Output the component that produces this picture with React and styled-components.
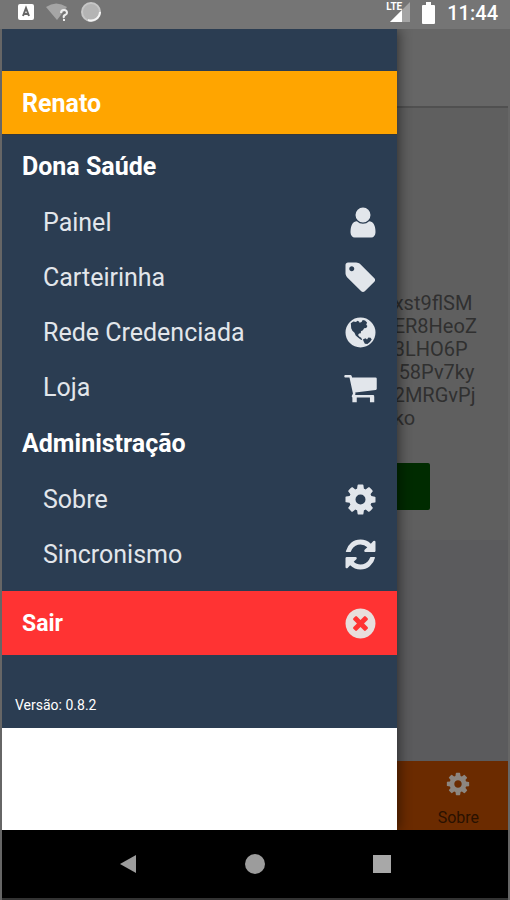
import styled, { createGlobalStyle } from 'styled-components';

const icons = {
  user: 'M1664 1399q0 109-62.5 187t-150.5 78h-854q-88 0-150.5-78t-62.5-187q0-85 8.5-160.5t31.5-152 58.5-131 94-89 134.5-34.5q131 128 313 128t313-128q76 0 134.5 34.5t94 89 58.5 131 31.5 152 8.5 160.5zm-256-887q0 159-112.5 271.5t-271.5 112.5-271.5-112.5-112.5-271.5 112.5-271.5 271.5-112.5 271.5 112.5 112.5 271.5z',
  tag: 'M576 448q0-53-37.5-90.5t-90.5-37.5-90.5 37.5-37.5 90.5 37.5 90.5 90.5 37.5 90.5-37.5 37.5-90.5zm1067 576q0 53-37 90l-491 492q-39 37-91 37-53 0-90-37l-715-716q-38-37-64.5-101t-26.5-117v-416q0-52 38-90t90-38h416q53 0 117 26.5t102 64.5l715 714q37 39 37 91z',
  globe:
    'M896 128a768 768 0 1 0 0 1536a768 768 0 1 0 0-1536z M400 420l130-90 140 30 60-70 90 40 30 70 100-40 60-110 120 30 100 110-40 110 60 60-60 100-110 20-60 100-100 50-10 110-90 10-50 80 70 80 90 60 60 120-90-30-130-110-120-100-60-140-110-100-60-130z M1020 1260l130-70 80 60 70-100 110 20 60 90-90 120-130 110-130-20-60-110z',
  cart: 'M480 1380h224v276h-224zm900 0h220v276h-220zM1728 448v512q0 24-16.5 42.5t-40.5 21.5l-1044 122q13 60 13 70 0 16-24 64h920q26 0 45 19t19 45-19 45-45 19h-1024q-26 0-45-19t-19-45q0-11 8-31.5t16-36 21.5-40 15.5-29.5l-177-823h-204q-26 0-45-19t-19-45 19-45 45-19h256q16 0 28.5 6.5t19.5 15.5 13 24.5 8 26 5.5 29.5 4.5 26h1201q26 0 45 19t19 45z',
  cog: 'M1152 896q0-106-75-181t-181-75-181 75-75 181 75 181 181 75 181-75 75-181zm512-109v222q0 12-8 23t-20 13l-185 28q-19 54-39 91 35 50 107 138 10 12 10 25t-9 23q-27 37-99 108t-94 71q-12 0-26-9l-138-108q-44 23-91 38-16 136-29 186-7 28-36 28h-222q-14 0-24.5-8.5t-11.5-21.5l-28-184q-49-16-90-37l-141 107q-10 9-25 9-14 0-25-11-126-114-165-168-7-10-7-23 0-12 8-23 15-21 51-66.5t54-70.5q-27-50-41-99l-183-27q-13-2-21-12.5t-8-23.5v-222q0-12 8-23t19-13l186-28q14-46 39-92-40-57-107-138-10-12-10-24 0-10 9-23 26-36 98.5-107.5t94.5-71.5q13 0 26 10l138 107q44-23 91-38 16-136 29-186 7-28 36-28h222q14 0 24.5 8.5t11.5 21.5l28 184q49 16 90 37l142-107q9-9 24-9 13 0 25 10 129 119 165 170 7 8 7 22 0 12-8 23-15 21-51 66.5t-54 70.5q26 50 41 98l183 28q13 2 21 12.5t8 23.5z',
  refresh:
    'M1639 1056q0 5-1 7-64 268-268 434.5t-478 166.5q-146 0-282.5-55t-243.5-157l-129 129q-19 19-45 19t-45-19-19-45v-448q0-26 19-45t45-19h448q26 0 45 19t19 45-19 45l-137 137q71 66 161 102t187 36q134 0 250-65t186-179q11-17 53-117 8-23 30-23h192q13 0 22.5 9.5t9.5 22.5zm25-800v448q0 26-19 45t-45 19h-448q-26 0-45-19t-19-45 19-45l138-138q-148-137-349-137-134 0-250 65t-186 179q-11 17-53 117-8 23-30 23h-199q-13 0-22.5-9.5t-9.5-22.5v-7q65-268 270-434.5t480-166.5q146 0 284 55.5t245 156.5l130-129q19-19 45-19t45 19 19 45z',
  close:
    'M1277 1122q0-26-19-45l-181-181 181-181q19-19 19-45 0-27-19-46l-90-90q-19-19-46-19-26 0-45 19l-181 181-181-181q-19-19-45-19-27 0-46 19l-90 90q-19 19-19 46 0 26 19 45l181 181-181 181q-19 19-19 45 0 27 19 46l90 90q19 19 46 19 26 0 45-19l181-181 181 181q19 19 45 19 27 0 46-19l90-90q19-19 19-46zm387-226q0 209-103 385.5t-279.5 279.5-385.5 103-385.5-103-279.5-279.5-103-385.5 103-385.5 279.5-279.5 385.5-103 385.5 103 279.5 279.5 103 385.5z',
};

const sections = [
  {
    title: 'Dona Saúde',
    items: [
      { label: 'Painel', icon: 'user' },
      { label: 'Carteirinha', icon: 'tag' },
      { label: 'Rede Credenciada', icon: 'globe' },
      { label: 'Loja', icon: 'cart' },
    ],
  },
  {
    title: 'Administração',
    items: [
      { label: 'Sobre', icon: 'cog' },
      { label: 'Sincronismo', icon: 'refresh' },
    ],
  },
];

const codeLines = ['xst9flSM', 'ER8HeoZ', '3LHO6P', '\u00a058Pv7ky', '2MRGvPj', 'ko'];

const Icon = ({ name, size = 35 }) => (
  <svg width={size} height={size} viewBox="0 0 1792 1792" fill="currentColor" aria-hidden="true">
    <path fillRule={name === 'cart' ? 'nonzero' : 'evenodd'} d={icons[name]} />
  </svg>
);

const StatusBar = () => (
  <Status>
    <StatusIcons>
      <svg width="16" height="18" viewBox="0 0 16 18">
        <rect y="2" width="16" height="16" rx="2" fill="#fff" />
        <path d="M5 14 8 6 11 14M6 12h4" stroke="#666" strokeWidth="2" fill="none" />
      </svg>
      <svg width="23" height="20" viewBox="0 0 23 20">
        <path d="M0 5Q10-2 21 5L11 18z" fill="#a5a5a5" />
        <path d="M15 11q0-3 3-3t3 3q0 1-2 2T18 16M18 17v2" stroke="#eee" strokeWidth="2" fill="none" />
      </svg>
      <svg width="21" height="21" viewBox="0 0 21 21">
        <circle cx="10" cy="10" r="9" fill="#b4b4b4" stroke="#c6c6c6" strokeWidth="2" />
        <path d="M19 10a9 9 0 0 1-12 8" stroke="#f4f4f4" strokeWidth="2" fill="none" />
      </svg>
    </StatusIcons>
    <StatusIcons>
      <Signal>
        <span>LTE</span>
        <svg width="20" height="20" viewBox="0 0 20 20">
          <path d="M20 0v20H0z" fill="#a4a4a4" />
          <path d="M12 8v12H0z" fill="#fff" />
        </svg>
      </Signal>
      <svg width="13" height="22" viewBox="0 0 13 22">
        <path d="M4 0h5v3h3q1 0 1 1v17q0 1-1 1H1q-1 0-1-1V4q0-1 1-1h3z" fill="#fff" />
      </svg>
      <Clock>11:44</Clock>
    </StatusIcons>
  </Status>
);

const App = () => {
  return (
    <>
      <GlobalStyle />
      <Phone>
        <StatusBar />
        <Screen>
          <Drawer>
            <DrawerPanel>
              <UserBar>Renato</UserBar>
              <Menu>
                {sections.map((section) => (
                  <section key={section.title}>
                    <SectionTitle>{section.title}</SectionTitle>
                    {section.items.map((item) => (
                      <MenuLink href="#" key={item.label}>
                        {item.label}
                        <Icon name={item.icon} />
                      </MenuLink>
                    ))}
                  </section>
                ))}
              </Menu>
              <LogoutButton type="button">
                Sair
                <Icon name="close" />
              </LogoutButton>
              <Version>Versão: 0.8.2</Version>
            </DrawerPanel>
          </Drawer>
          <Page>
            <PageHeader />
            <Card>
              <Code>
                {codeLines.map((line) => (
                  <span key={line}>{line}</span>
                ))}
              </Code>
              <ConfirmButton type="button" aria-label="Confirmar" />
            </Card>
            <TabBar>
              <Tab href="#">
                <Icon name="cog" size={26} />
                Sobre
              </Tab>
            </TabBar>
          </Page>
        </Screen>
        <NavBar>
          <NavButton type="button" aria-label="Voltar">
            <svg width="20" height="20" viewBox="0 0 20 20">
              <path d="M18 1v18L2 10z" fill="#9c9c9c" />
            </svg>
          </NavButton>
          <NavButton type="button" aria-label="Início">
            <svg width="20" height="20" viewBox="0 0 20 20">
              <circle cx="10" cy="10" r="10" fill="#9c9c9c" />
            </svg>
          </NavButton>
          <NavButton type="button" aria-label="Recentes">
            <svg width="20" height="20" viewBox="0 0 20 20">
              <rect x="1" y="1" width="18" height="18" fill="#a8a8a8" />
            </svg>
          </NavButton>
        </NavBar>
      </Phone>
    </>
  );
};
export default App;

const GlobalStyle = createGlobalStyle`
  * {
    box-sizing: border-box;
  }
  body {
    margin: 0;
    background-color: #666;
    font-family: Roboto, sans-serif;
  }
  svg {
    display: block;
    flex-shrink: 0;
  }
  a {
    text-decoration: none;
  }
  button {
    border: 0;
    font-family: inherit;
    cursor: pointer;
  }
`;
const Phone = styled.div`
  display: flex;
  flex-direction: column;
  min-height: 100vh;
  padding: 0 2px;
`;
const Status = styled.header`
  display: flex;
  justify-content: space-between;
  height: 29px;
  margin: 0 -2px;
  padding: 2px 12px 0 18px;
  background-color: #757575;
  color: #fff;
`;
const StatusIcons = styled.div`
  display: flex;
  align-items: flex-start;
  gap: 12px;
`;
const Signal = styled.div`
  display: flex;
  align-items: flex-start;
  font-size: 10px;
  line-height: 10px;
  font-weight: 700;
  svg {
    margin-left: -12px;
  }
`;
const Clock = styled.time`
  font-size: 20px;
  line-height: 22px;
  font-weight: 500;
`;
const Screen = styled.main`
  display: flex;
  flex: 1;
`;
const Drawer = styled.aside`
  z-index: 1;
  width: 78%;
  background-color: #fff;
  box-shadow: 2px 0 12px rgba(0, 0, 0, 0.5);
  clip-path: inset(0 -16px 0 0);
`;
const DrawerPanel = styled.div`
  padding-top: 42px;
  background-color: #2b3d52;
`;
const UserBar = styled.div`
  height: 64px;
  padding-left: 20px;
  border-bottom: 1px solid #35383c;
  background-color: #ffa500;
  color: #fff;
  font-size: 25px;
  line-height: 66px;
  font-weight: 700;
`;
const Menu = styled.nav`
  padding: 3px 0 9px;
`;
const SectionTitle = styled.h2`
  margin: 0;
  padding-left: 20px;
  color: #fff;
  font-size: 25px;
  line-height: 57px;
  font-weight: 700;
`;
const MenuLink = styled.a`
  display: flex;
  align-items: center;
  justify-content: space-between;
  height: 55px;
  padding: 0 19px 0 41px;
  color: #e2e6eb;
  font-size: 25px;
`;
const LogoutButton = styled.button`
  display: flex;
  align-items: center;
  justify-content: space-between;
  width: 100%;
  height: 64px;
  padding: 0 19px 0 20px;
  background-color: #ff3333;
  color: #fff;
  font-size: 23px;
  font-weight: 700;
  svg {
    color: #e8dedc;
  }
`;
const Version = styled.p`
  margin: 0;
  padding: 38px 13px 11px;
  color: #fff;
  font-size: 14px;
  line-height: 24px;
`;
const Page = styled.div`
  display: flex;
  flex: 1;
  flex-direction: column;
  background-color: #5d5d5f;
`;
const PageHeader = styled.div`
  height: 79px;
  border-bottom: 2px solid #505050;
  background-color: #666;
`;
const Card = styled.div`
  flex: 1;
  padding-top: 184px;
  background: linear-gradient(#5f5f5f 0 432px, #5b5b5d 432px);
`;
const Code = styled.div`
  display: flex;
  flex-direction: column;
  align-items: flex-start;
  margin-left: -3px;
  color: #303030;
  font-size: 20px;
  line-height: 23px;
`;
const ConfirmButton = styled.button`
  display: block;
  width: 33px;
  height: 47px;
  margin-top: 33px;
  border-radius: 0 2px 2px 0;
  background-color: #002b00;
`;
const TabBar = styled.nav`
  height: 69px;
  background-color: #6b2b00;
`;
const Tab = styled.a`
  display: flex;
  flex-direction: column;
  align-items: center;
  padding: 10px 0 0 12px;
  color: #291100;
  font-size: 16px;
  line-height: 42px;
  svg {
    color: #8c8680;
  }
`;
const NavBar = styled.footer`
  display: flex;
  justify-content: center;
  gap: 67px;
  height: 70px;
  border-bottom: 2px solid #333;
  background-color: #000;
`;
const NavButton = styled.button`
  display: flex;
  align-items: center;
  justify-content: center;
  width: 60px;
  padding: 0;
  background: transparent;
`;
